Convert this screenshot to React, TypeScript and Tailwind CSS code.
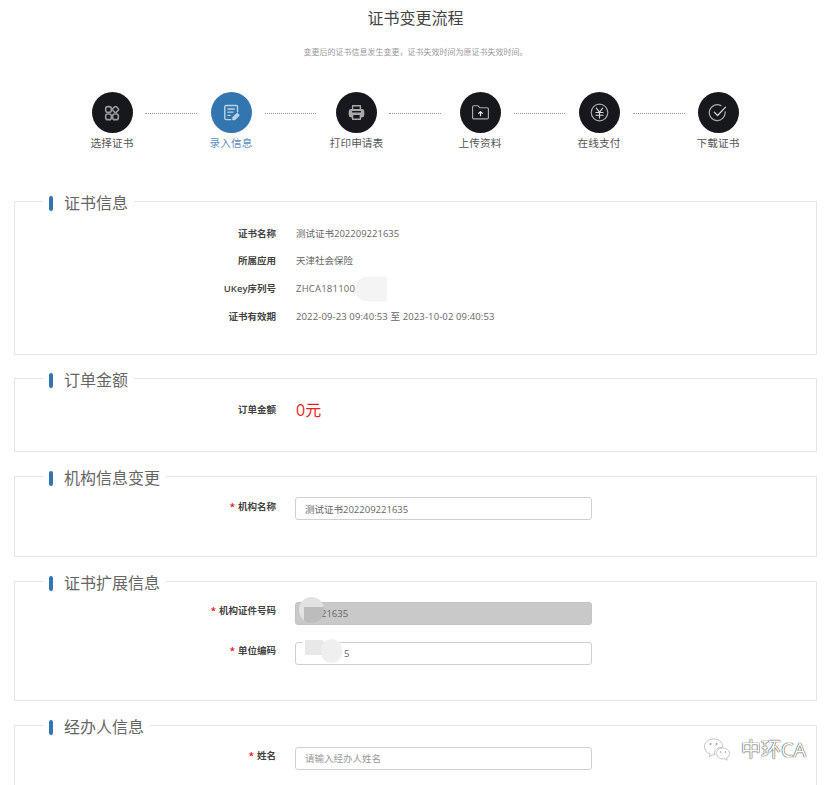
import type { ReactNode } from "react";

const font = "font-['Open_Sans','Noto_Sans_CJK_SC',sans-serif]";

function iconProps(size: number) {
  return {
    width: size,
    height: size,
    viewBox: "0 0 24 24",
    fill: "none",
    strokeWidth: 1.8,
    strokeLinecap: "round" as const,
    strokeLinejoin: "round" as const,
  };
}

const steps: {
  label: string;
  width: string;
  line?: string;
  active?: boolean;
  icon: ReactNode;
}[] = [
  {
    label: "选择证书",
    width: "w-[44px]",
    icon: (
      <svg {...iconProps(16)} stroke="#9a9a9d" strokeWidth={2.4}>
        <rect x="2.500" y="2.500" width="8.500" height="8.500" rx="3" />
        <rect x="13.500" y="3" width="7.500" height="7.500" rx="2" transform="rotate(45 17.250 6.750)" />
        <rect x="2.500" y="13.500" width="8.500" height="8.500" rx="3" />
        <rect x="13" y="13.500" width="8.500" height="8.500" rx="3" />
      </svg>
    ),
  },
  {
    label: "录入信息",
    width: "w-[44px]",
    line: "ml-[11px] mr-[12px] w-[52px]",
    active: true,
    icon: (
      <svg {...iconProps(17)} stroke="#b9d2e6" strokeWidth={2}>
        <path d="M11 22H4.500a2 2 0 0 1-2-2V4a2 2 0 0 1 2-2h14a2 2 0 0 1 2 2v7" />
        <path d="M7 7h9M7 11.500h7M7 16h3" />
        <path d="M14 22v-2.500l6-6 2.500 2.500-6 6z" fill="#b9d2e6" />
      </svg>
    ),
  },
  {
    label: "打印申请表",
    width: "w-[55px]",
    line: "ml-[12px] mr-[13px] w-[51px]",
    icon: (
      <svg {...iconProps(17)} stroke="#a9a9ab" strokeWidth={2}>
        <path d="M6.500 8V2.500h11V8" />
        <rect x="2" y="8" width="20" height="10" rx="2.500" fill="#a9a9ab" />
        <path d="M6.500 14.500h11V21.500h-11z" fill="#17181e" />
        <path d="M6.500 11h11" stroke="#17181e" />
      </svg>
    ),
  },
  {
    label: "上传资料",
    width: "w-[44px]",
    line: "ml-[5px] mr-[17px] w-[52px]",
    icon: (
      <svg {...iconProps(19)} stroke="#a9a9ab" strokeWidth={1.5}>
        <path d="M2 5a1.500 1.500 0 0 1 1.500-1.500H9L11 6h9.500A1.500 1.500 0 0 1 22 7.500v11a1.500 1.500 0 0 1-1.500 1.500h-17A1.500 1.500 0 0 1 2 18.500z" />
        <path d="M12 16v-5M9.800 13l2.200-2.200 2.200 2.200" stroke="#e4e4e4" />
      </svg>
    ),
  },
  {
    label: "在线支付",
    width: "w-[44px]",
    line: "ml-[12px] mr-[12px] w-[51px]",
    icon: (
      <svg {...iconProps(19)} stroke="#a9a9ab" strokeWidth={1.5}>
        <circle cx="12" cy="12" r="10.500" />
        <path d="M8 6.500l4 5 4-5M7.500 12h9M7.500 15.500h9M12 11.500V19" stroke="#d5d5d5" />
      </svg>
    ),
  },
  {
    label: "下载证书",
    width: "w-[44px]",
    line: "ml-[12px] mr-[11px] w-[52px]",
    icon: (
      <svg {...iconProps(20)} stroke="#a9a9ab" strokeWidth={1.5}>
        <path d="M20.500 10.500A9.500 9.500 0 1 1 15.500 3.200" />
        <path d="M7.500 11l4 4 9.500-10" stroke="#d5d5d5" />
      </svg>
    ),
  },
];

function Steps() {
  return (
    <div className="mt-[34px] flex justify-center pr-[1px]">
      {steps.map((step) => (
        <div key={step.label} className="flex items-start">
          {step.line && (
            <div className={`mt-[21px] border-t border-dotted border-[#9a9a9a] ${step.line}`} />
          )}
          <div className={`flex flex-col items-center ${step.width}`}>
            <div
              className={
                step.active
                  ? "flex h-[41px] w-[41px] items-center justify-center rounded-full bg-[#3375ae]"
                  : "flex h-[41px] w-[41px] items-center justify-center rounded-full bg-[#17181e]"
              }
            >
              {step.icon}
            </div>
            <span
              className={
                step.active
                  ? "mt-[2px] text-[10.700px] leading-[16px] whitespace-nowrap text-[#5f8fbb]"
                  : "mt-[2px] text-[10.700px] leading-[16px] whitespace-nowrap text-[#555]"
              }
            >
              {step.label}
            </span>
          </div>
        </div>
      ))}
    </div>
  );
}

function Section({
  title,
  className,
  children,
}: {
  title: string;
  className: string;
  children: ReactNode;
}) {
  return (
    <fieldset className={`mx-[14px] border border-[#e6e6e6] ${className}`}>
      <legend className="ml-[28px] box-border flex h-[20px] items-center pt-[4px] pr-[6px] pl-[6px]">
        <span className="h-[15px] w-[4px] rounded-[2px] bg-[#3375ae]" />
        <span className="ml-[11px] text-[16px] leading-[20px] text-[#666]">{title}</span>
      </legend>
      {children}
    </fieldset>
  );
}

function Label({ required, children }: { required?: boolean; children: ReactNode }) {
  return (
    <div className="w-[261px] shrink-0 text-right text-[9.500px] font-semibold whitespace-nowrap text-[#444]">
      {required && <span className="mr-[3px] text-[#e60012]">*</span>}
      {children}
    </div>
  );
}

function Row({ label, children }: { label: string; children: ReactNode }) {
  return (
    <div className="flex h-[27.700px] items-center gap-[20px]">
      <Label>{label}</Label>
      <div className="text-[9.500px] whitespace-nowrap text-[#666]">{children}</div>
    </div>
  );
}

function InputRow({
  label,
  value,
  placeholder,
  disabled,
  padding = "pl-[9px]",
  children,
}: {
  label: string;
  value?: string;
  placeholder?: string;
  disabled?: boolean;
  padding?: string;
  children?: ReactNode;
}) {
  return (
    <div className="flex h-[23px] items-center gap-[19px]">
      <Label required>{label}</Label>
      <div className="relative">
        <input
          readOnly
          value={value}
          placeholder={placeholder}
          className={
            disabled
              ? `h-[23px] w-[297px] rounded-[3px] border border-[#c4c4c4] bg-[#c9c9c9] text-[9.500px] text-[#666] outline-none ${padding}`
              : `h-[23px] w-[297px] rounded-[3px] border border-[#d0d0d0] bg-white text-[9.500px] text-[#666] outline-none placeholder:text-[#999] ${padding}`
          }
        />
        {children}
      </div>
    </div>
  );
}

export default function App() {
  return (
    <main className={`relative h-[785px] w-[831px] overflow-hidden bg-white ${font}`}>
      <h1 className="pt-[8px] text-center text-[16px] leading-[20px] font-normal text-[#444]">
        证书变更流程
      </h1>
      <p className="mt-[18px] text-center text-[8px] leading-[12px] text-[#999]">
        变更后的证书信息发生变更，证书失效时间为原证书失效时间。
      </p>
      <Steps />

      <div className="mt-[40px] flex flex-col">
        <Section title="证书信息" className="mb-[13px] h-[164px] pt-[9px]">
          <Row label="证书名称">测试证书202209221635</Row>
          <Row label="所属应用">天津社会保险</Row>
          <Row label="UKey序列号">
            <div className="relative tracking-[0.200px]">
              ZHCA181100
              <span className="absolute top-1/2 left-[59px] h-[25px] w-[32px] -translate-y-1/2 rounded-l-full rounded-r-[8px] bg-[#f4f4f4]" />
            </div>
          </Row>
          <Row label="证书有效期">
            <span className="tracking-[0.120px]">2022-09-23 09:40:53 至 2023-10-02 09:40:53</span>
          </Row>
        </Section>

        <Section title="订单金额" className="mb-[14px] h-[84px] pt-[8px]">
          <div className="flex h-[28px] items-center gap-[20px]">
            <Label>订单金额</Label>
            <div className="text-[16px] text-[#f01e1e]">0元</div>
          </div>
        </Section>

        <Section title="机构信息变更" className="mb-[14px] h-[91px] pt-[10px]">
          <InputRow label="机构名称" value="测试证书202209221635" />
        </Section>

        <Section title="证书扩展信息" className="mb-[14px] h-[130px] pt-[9px]">
          <div className="flex flex-col gap-[17px]">
            <InputRow label="机构证件号码" value="21635" disabled padding="pl-[25px]">
              <span className="absolute top-[-2px] left-[4px] h-[26px] w-[25px] rounded-full bg-[linear-gradient(#e2e2e2_40%,transparent_40%),linear-gradient(90deg,#e2e2e2_22%,#bcbcbc_22%)]" />
            </InputRow>
            <InputRow label="单位编码" value="5" padding="pl-[48px]">
              <span className="absolute top-[-3px] left-[7px] h-[8px] w-[20px] rounded-full bg-white" />
              <span className="absolute top-[1px] left-[10px] h-[15px] w-[18px] bg-[#e8e8e8]" />
              <span className="absolute top-[0px] left-[26px] h-[24px] w-[21px] rounded-full bg-[#efefef]" />
            </InputRow>
          </div>
        </Section>

        <Section title="经办人信息" className="h-[90px] pt-[10px]">
          <InputRow label="姓名" placeholder="请输入经办人姓名" />
        </Section>
      </div>

      <div className="absolute top-[737px] left-[702px] flex items-center gap-[8px]">
        <svg width="31" height="26" viewBox="0 0 30 26" fill="white" stroke="#b5b5b5" strokeWidth="0.8">
          <path d="M11 2c5 0 9 3 9 7 0 .5 0 1-.2 1.500-4-.5-7.800 2-7.800 5.500 0 .7.100 1.300.3 1.800-.8.100-1.500.100-2.300 0l-3 1.700.6-2.700C4 16 2 13 2 9.500 2 5.500 6 2 11 2z" />
          <path d="M20 11c4 0 7 2.500 7 5.500 0 2-1 3.500-2.800 4.500l.5 2.200-2.500-1.400c-3.700.8-8.200-1.500-8.200-5.300 0-3 2.800-5.500 6-5.500z" />
          <circle cx="8" cy="7" r="1" fill="#999" stroke="none" />
          <circle cx="14" cy="7" r="1" fill="#999" stroke="none" />
          <circle cx="18" cy="15" r="0.800" fill="#999" stroke="none" />
          <circle cx="23" cy="15" r="0.800" fill="#999" stroke="none" />
        </svg>
        <span className="text-[20px] leading-[26px] text-white [text-shadow:0_0_1px_#222,0_0_1px_#222]">中环CA</span>
      </div>
    </main>
  );
}
